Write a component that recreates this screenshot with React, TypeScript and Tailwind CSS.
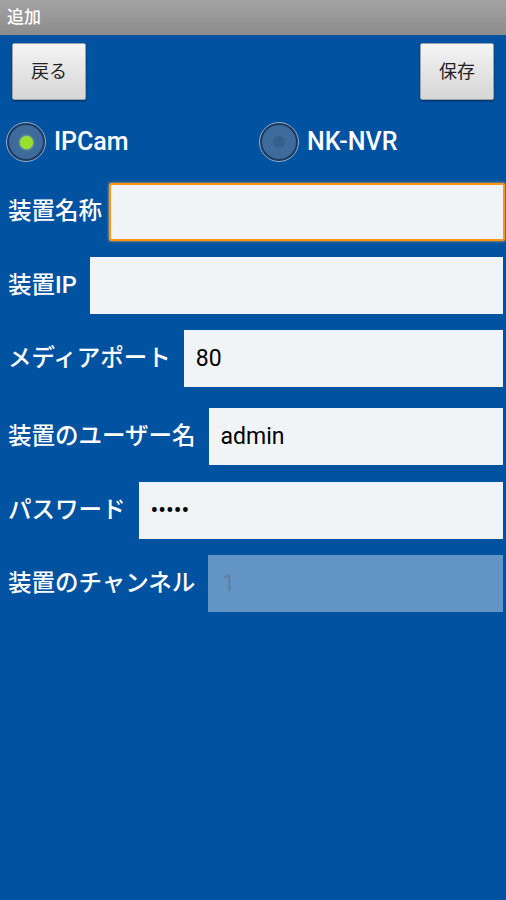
import { useState } from 'react';

const FONT = "font-['Roboto','Noto_Sans_CJK_JP',sans-serif]";

type Row = {
  label: string;
  value: string;
  top: string;
  kind?: 'focus' | 'disabled' | 'password';
};

const rows: Row[] = [
  { label: '装置名称', value: '', top: 'mt-[21px]', kind: 'focus' },
  { label: '装置IP', value: '', top: 'mt-[16px]' },
  { label: 'メディアポート', value: '80', top: 'mt-[16px]' },
  { label: '装置のユーザー名', value: 'admin', top: 'mt-[21px]' },
  { label: 'パスワード', value: 'admin', top: 'mt-[17px]', kind: 'password' },
  { label: '装置のチャンネル', value: '1', top: 'mt-[16px]', kind: 'disabled' },
];

function Radio({ checked }: { checked: boolean }) {
  return (
    <span className="flex h-[40px] w-[40px] items-center justify-center rounded-full border border-[#8fb0d3] bg-[#1d3a5e]">
      <span className="flex h-[34px] w-[34px] items-center justify-center rounded-full bg-[#3c6b9c]">
        {checked ? (
          <span className="h-[13px] w-[13px] rounded-full bg-[#9be12c] shadow-[0_0_3px_#c8ff70]" />
        ) : (
          <span className="h-[12px] w-[12px] rounded-full bg-[#35608c]" />
        )}
      </span>
    </span>
  );
}

export default function App() {
  const [mode, setMode] = useState<'ipcam' | 'nvr'>('ipcam');

  return (
    <div className={`flex h-[900px] w-[506px] flex-col bg-[#0252a2] ${FONT}`}>
      <div className="flex h-[35px] items-center bg-gradient-to-b from-[#a3a3a3] to-[#8c8c8c] pl-[7px] text-[17px] font-medium text-white">
        追加
      </div>

      <div className="mt-[8px] flex justify-between px-[12px]">
        <button className="h-[57px] w-[74px] rounded-[2px] border border-[#9aa4ae] bg-gradient-to-b from-[#f4f4f4] to-[#d6d6d6] text-[18px] text-[#222] shadow-[0_1px_2px_rgba(0,0,0,0.5)]">
          戻る
        </button>
        <button className="h-[57px] w-[74px] rounded-[2px] border border-[#9aa4ae] bg-gradient-to-b from-[#f4f4f4] to-[#d6d6d6] text-[18px] text-[#222] shadow-[0_1px_2px_rgba(0,0,0,0.5)]">
          保存
        </button>
      </div>

      <div className="mt-[22px] flex items-center">
        <button className="flex w-[259px] items-center gap-[8px] pl-[6px]" onClick={() => setMode('ipcam')}>
          <Radio checked={mode === 'ipcam'} />
          <span className="text-[25px] font-medium text-white">IPCam</span>
        </button>
        <button className="flex items-center gap-[8px]" onClick={() => setMode('nvr')}>
          <Radio checked={mode === 'nvr'} />
          <span className="text-[25px] font-medium text-white">NK-NVR</span>
        </button>
      </div>

      {rows.map((r) => (
        <div key={r.label} className={`flex items-center pl-[8px] ${r.top}`}>
          <span className="whitespace-nowrap text-[23.5px] font-medium text-white">{r.label}</span>
          {r.kind === 'focus' ? (
            <input
              className="ml-[7px] mr-[1px] h-[58px] min-w-0 flex-1 rounded-[2px] border-2 border-[#ff9416] bg-[#f1f4f7] px-[12px] text-[23px] text-black shadow-[0_0_3px_#ffb04a] outline-none"
              defaultValue={r.value}
            />
          ) : r.kind === 'disabled' ? (
            <input
              className="ml-[13px] mr-[3px] h-[57px] min-w-0 flex-1 bg-[#6394c6] px-[14px] text-[23px] text-[#5d7fa3] outline-none"
              defaultValue={r.value}
              disabled
            />
          ) : (
            <input
              type={r.kind === 'password' ? 'password' : 'text'}
              className="ml-[13px] mr-[3px] h-[57px] min-w-0 flex-1 bg-[#f1f4f7] px-[12px] text-[23px] text-black outline-none"
              defaultValue={r.value}
            />
          )}
        </div>
      ))}
    </div>
  );
}
